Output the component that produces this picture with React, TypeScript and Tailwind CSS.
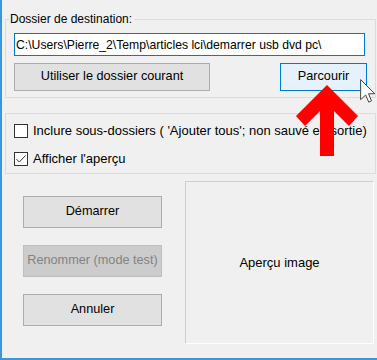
import React from "react";

function CheckBox({ checked }: { checked?: boolean }) {
  return (
    <div className="w-[14px] h-[14px] border border-[#333333] bg-white flex items-center justify-center shrink-0">
      {checked && (
        <svg width="12" height="12" viewBox="0 0 12 12">
          <path d="M1.5 6.2 L4.3 9 L10.5 2.5" fill="none" stroke="#333333" strokeWidth="1" />
        </svg>
      )}
    </div>
  );
}

function WinButton({
  children,
  disabled,
  className = "",
}: {
  children: React.ReactNode;
  disabled?: boolean;
  className?: string;
}) {
  return (
    <button
      type="button"
      disabled={disabled}
      className={
        "border flex items-center justify-center " +
        (disabled
          ? "bg-[#cccccc] border-[#bfbfbf] text-[#838383] "
          : "bg-[#e1e1e1] border-[#adadad] text-black ") +
        className
      }
    >
      {children}
    </button>
  );
}

export default function App() {
  return (
    <div className="relative w-[377px] h-[360px] overflow-hidden bg-[#f0f0f0] border-l-2 border-b-2 border-[#3a96dd] font-['Liberation_Sans',Arial,sans-serif] text-[12.7px] text-black">
      <div className="pl-[3px] pt-[11px]">
        <fieldset className="w-[369px] border border-[#dcdcdc] px-[8px] pb-[6px]">
          <legend className="-ml-[5px] pl-[1px] pr-[2px] h-[16px] leading-[16px] text-[12px]">
            Dossier de destination:
          </legend>
          <input
            readOnly
            value="C:\Users\Pierre_2\Temp\articles lci\demarrer usb dvd pc\"
            className="mt-[6px] block w-[351px] h-[23px] border border-[#0078d7] bg-white px-[1px] text-[12.2px] outline-none"
          />
          <div className="mt-[7px] flex gap-[70px]">
            <WinButton className="w-[196px] h-[28px]">Utiliser le dossier courant</WinButton>
            <button
              type="button"
              className="w-[87px] h-[28px] bg-[#e5f1fb] border border-[#0078d7] flex items-center justify-center"
            >
              Parcourir
            </button>
          </div>
        </fieldset>

        <fieldset className="mt-[15px] w-[369px] border border-[#dcdcdc] px-[8px] pt-[10px] pb-[7px]">
          <div className="flex flex-col gap-[14px]">
            <label className="flex items-center h-[14px]">
              <CheckBox />
              <span className="ml-[5px] whitespace-nowrap text-[13px]">
                Inclure sous-dossiers ( 'Ajouter tous'; non sauvé en sortie)
              </span>
            </label>
            <label className="flex items-center h-[14px]">
              <CheckBox checked />
              <span className="ml-[5px] text-[13px]">Afficher l'aperçu</span>
            </label>
          </div>
        </fieldset>
      </div>

      <div className="mt-[7px] flex">
        <div className="ml-[21px] pt-[15px] flex flex-col gap-[17px]">
          <WinButton className="w-[139px] h-[32px]">Démarrer</WinButton>
          <WinButton disabled className="w-[139px] h-[32px]">
            Renommer (mode test)
          </WinButton>
          <WinButton className="w-[139px] h-[32px]">Annuler</WinButton>
        </div>
        <div className="ml-[23px] w-[189px] h-[163px] border border-t-[#cfcfcf] border-l-[#cfcfcf] border-r-white border-b-white flex items-center justify-center text-[13px]">
          Aperçu image
        </div>
      </div>

      <svg className="absolute inset-0 pointer-events-none" width="377" height="360">
        <polygon
          points="325,85 356,116 347,126 332,111 332,156 318,156 318,111 303,126 294,116"
          fill="#ff0000"
        />
        <g transform="translate(358,79) scale(1.25)">
          <path
            d="M0.5 0.5 L0.5 16.5 L4.5 12.8 L7 18.5 L9.2 17.5 L6.8 11.8 L11.8 11.8 Z"
            fill="white"
            stroke="#444"
            strokeWidth="0.8"
            strokeLinejoin="round"
          />
        </g>
      </svg>
    </div>
  );
}
